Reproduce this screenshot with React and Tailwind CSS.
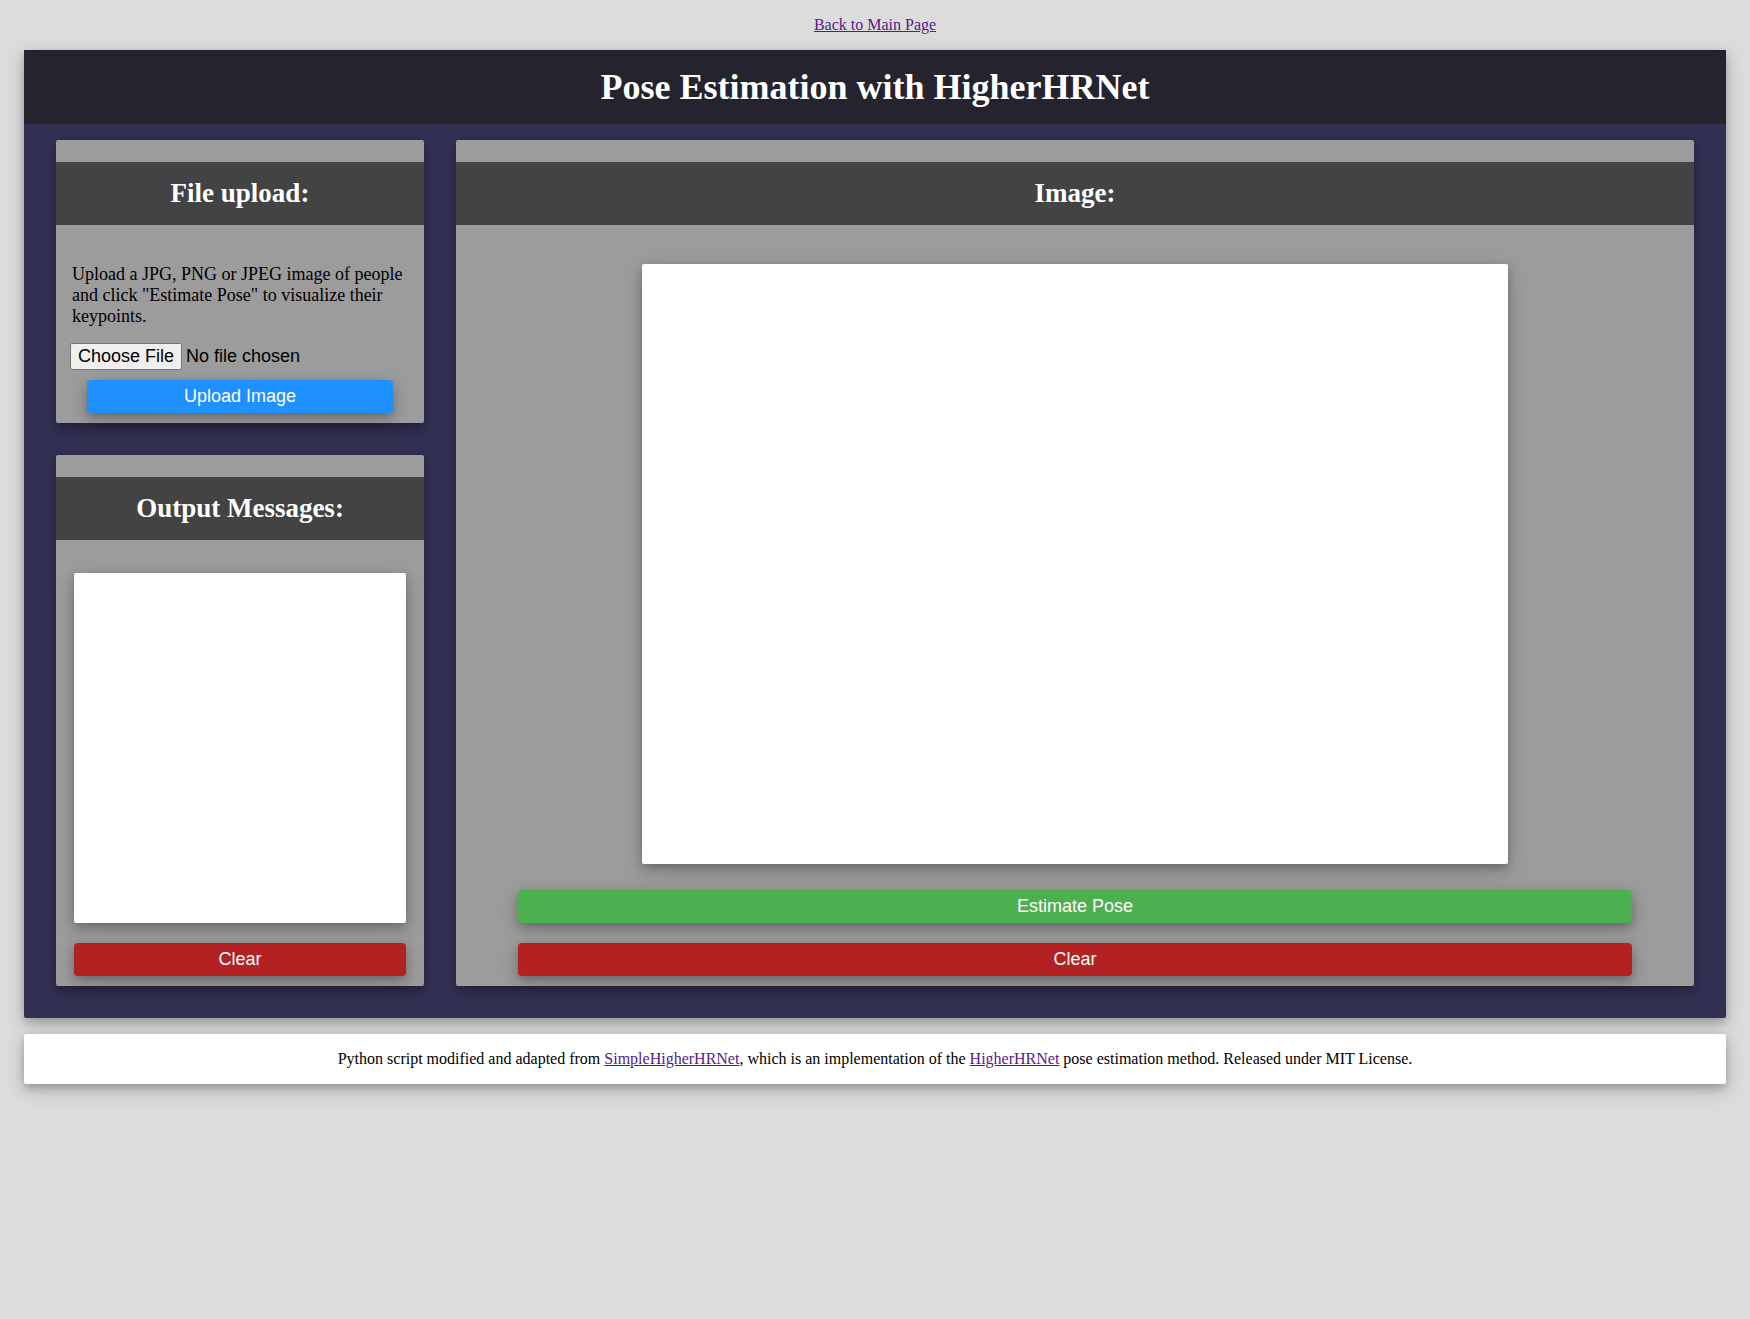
const raised = "shadow-[0_4px_8px_0_rgba(0,0,0,0.2),0_6px_20px_0_rgba(0,0,0,0.19)]";
const sans = "font-['Liberation_Sans',sans-serif]";

function Card({ title, className = "", children }) {
  return (
    <section className={`flex flex-col rounded-xs bg-[#9c9c9c] pt-[22px] pb-2.5 ${raised} ${className}`}>
      <h2 className="bg-[#434343] py-4 text-center text-[27px] leading-[31px] font-bold text-white">{title}</h2>
      {children}
    </section>
  );
}

function Button({ className, children }) {
  return (
    <button
      type="button"
      className={`mx-auto block w-[90%] cursor-pointer rounded py-1.5 text-center text-lg leading-[21px] text-white ${sans} ${raised} ${className}`}
    >
      {children}
    </button>
  );
}

function Link({ children }) {
  return (
    <a href="#" className="text-[#551a8b] underline">
      {children}
    </a>
  );
}

export default function App() {
  return (
    <div className="min-h-screen bg-[#dcdcdc] px-6 py-4 font-['Liberation_Serif',serif] text-base leading-[18px] text-black">
      <nav className="mb-4 text-center">
        <Link>Back to Main Page</Link>
      </nav>

      <main className={`rounded-xs bg-[#333153] ${raised}`}>
        <h1 className="bg-[#25232d] py-4 text-center text-4xl leading-[42px] font-bold text-white">
          Pose Estimation with HigherHRNet
        </h1>

        <div className="grid grid-cols-[184fr_619fr] gap-8 px-8 pt-4 pb-8">
          <div className="flex flex-col gap-8">
            <Card title="File upload:">
              <p className="mt-[39px] px-4 text-lg leading-[21px]">
                Upload a JPG, PNG or JPEG image of people and click "Estimate Pose" to visualize their keypoints.
              </p>
              <form className="mt-4 px-3.5">
                <input
                  type="file"
                  aria-label="Image file"
                  className={`mb-2.5 block h-[27px] w-full text-lg leading-[21px] ${sans} file:h-[27px] file:rounded-xs file:border file:border-solid file:border-[#767676] file:bg-[#efefef] file:px-[7px] file:text-black`}
                />
                <Button className="bg-[#1e90ff]">Upload Image</Button>
              </form>
            </Card>

            <Card title="Output Messages:">
              <div role="log" aria-label="Output messages" className={`mx-auto mt-[33px] mb-5 h-[350px] w-[90%] rounded-xs bg-white ${raised}`} />
              <Button className="bg-[#b22222]">Clear</Button>
            </Card>
          </div>

          <Card title="Image:">
            <div className={`mx-auto mt-[39px] mb-[26px] h-[600px] w-[70%] rounded-xs bg-white ${raised}`} />
            <Button className="mb-5 bg-[#4caf50]">Estimate Pose</Button>
            <Button className="bg-[#b22222]">Clear</Button>
          </Card>
        </div>
      </main>

      <footer className={`mt-4 rounded-xs bg-white p-4 text-center ${raised}`}>
        Python script modified and adapted from <Link>SimpleHigherHRNet</Link>, which is an implementation of the{" "}
        <Link>HigherHRNet</Link> pose estimation method. Released under MIT License.
      </footer>
    </div>
  );
}
